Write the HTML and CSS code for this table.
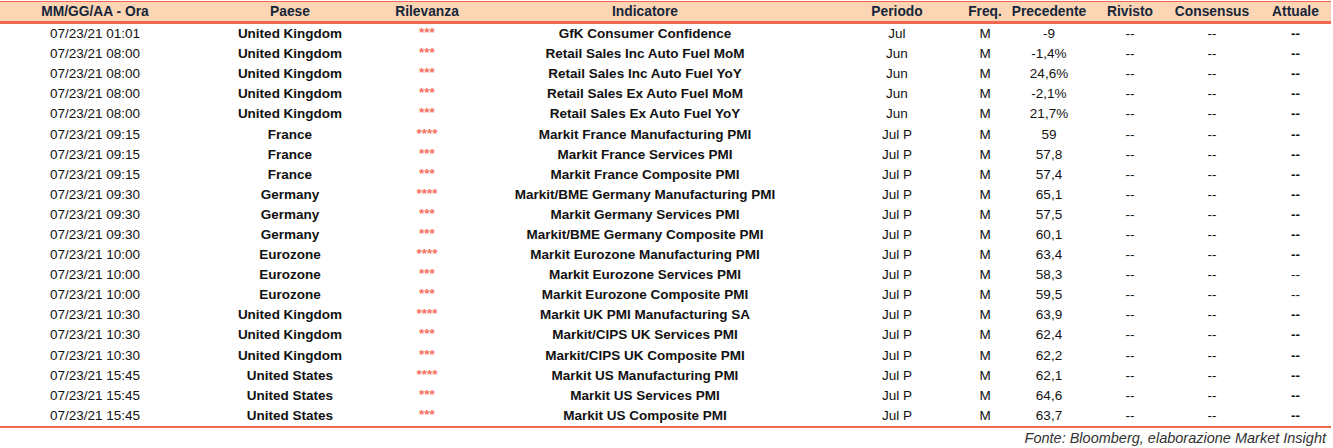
FILE: index.html
```html
<!DOCTYPE html>
<html lang="it">
<head>
<meta charset="utf-8">
<title>Calendario macro</title>
<link rel="stylesheet" href="styles.css">
</head>
<body>
<div class="cal">
  <div class="row head">
    <div>MM/GG/AA - Ora</div><div>Paese</div><div>Rilevanza</div><div>Indicatore</div><div>Periodo</div><div>Freq.</div><div>Precedente</div><div>Rivisto</div><div>Consensus</div><div>Attuale</div>
  </div>
  <div class="body">
    <div class="row"><div>07/23/21 01:01</div><div class="b">United Kingdom</div><div class="st">***</div><div class="b">GfK Consumer Confidence</div><div>Jul</div><div>M</div><div>-9</div><div>--</div><div>--</div><div class="b">--</div></div>
    <div class="row"><div>07/23/21 08:00</div><div class="b">United Kingdom</div><div class="st">***</div><div class="b">Retail Sales Inc Auto Fuel MoM</div><div>Jun</div><div>M</div><div>-1,4%</div><div>--</div><div>--</div><div class="b">--</div></div>
    <div class="row"><div>07/23/21 08:00</div><div class="b">United Kingdom</div><div class="st">***</div><div class="b">Retail Sales Inc Auto Fuel YoY</div><div>Jun</div><div>M</div><div>24,6%</div><div>--</div><div>--</div><div class="b">--</div></div>
    <div class="row"><div>07/23/21 08:00</div><div class="b">United Kingdom</div><div class="st">***</div><div class="b">Retail Sales Ex Auto Fuel MoM</div><div>Jun</div><div>M</div><div>-2,1%</div><div>--</div><div>--</div><div class="b">--</div></div>
    <div class="row"><div>07/23/21 08:00</div><div class="b">United Kingdom</div><div class="st">***</div><div class="b">Retail Sales Ex Auto Fuel YoY</div><div>Jun</div><div>M</div><div>21,7%</div><div>--</div><div>--</div><div class="b">--</div></div>
    <div class="row"><div>07/23/21 09:15</div><div class="b">France</div><div class="st">****</div><div class="b">Markit France Manufacturing PMI</div><div>Jul P</div><div>M</div><div>59</div><div>--</div><div>--</div><div class="b">--</div></div>
    <div class="row"><div>07/23/21 09:15</div><div class="b">France</div><div class="st">***</div><div class="b">Markit France Services PMI</div><div>Jul P</div><div>M</div><div>57,8</div><div>--</div><div>--</div><div class="b">--</div></div>
    <div class="row"><div>07/23/21 09:15</div><div class="b">France</div><div class="st">***</div><div class="b">Markit France Composite PMI</div><div>Jul P</div><div>M</div><div>57,4</div><div>--</div><div>--</div><div class="b">--</div></div>
    <div class="row"><div>07/23/21 09:30</div><div class="b">Germany</div><div class="st">****</div><div class="b">Markit/BME Germany Manufacturing PMI</div><div>Jul P</div><div>M</div><div>65,1</div><div>--</div><div>--</div><div class="b">--</div></div>
    <div class="row"><div>07/23/21 09:30</div><div class="b">Germany</div><div class="st">***</div><div class="b">Markit Germany Services PMI</div><div>Jul P</div><div>M</div><div>57,5</div><div>--</div><div>--</div><div class="b">--</div></div>
    <div class="row"><div>07/23/21 09:30</div><div class="b">Germany</div><div class="st">***</div><div class="b">Markit/BME Germany Composite PMI</div><div>Jul P</div><div>M</div><div>60,1</div><div>--</div><div>--</div><div class="b">--</div></div>
    <div class="row"><div>07/23/21 10:00</div><div class="b">Eurozone</div><div class="st">****</div><div class="b">Markit Eurozone Manufacturing PMI</div><div>Jul P</div><div>M</div><div>63,4</div><div>--</div><div>--</div><div class="b">--</div></div>
    <div class="row"><div>07/23/21 10:00</div><div class="b">Eurozone</div><div class="st">***</div><div class="b">Markit Eurozone Services PMI</div><div>Jul P</div><div>M</div><div>58,3</div><div>--</div><div>--</div><div>--</div></div>
    <div class="row"><div>07/23/21 10:00</div><div class="b">Eurozone</div><div class="st">***</div><div class="b">Markit Eurozone Composite PMI</div><div>Jul P</div><div>M</div><div>59,5</div><div>--</div><div>--</div><div>--</div></div>
    <div class="row"><div>07/23/21 10:30</div><div class="b">United Kingdom</div><div class="st">****</div><div class="b">Markit UK PMI Manufacturing SA</div><div>Jul P</div><div>M</div><div>63,9</div><div>--</div><div>--</div><div class="b">--</div></div>
    <div class="row"><div>07/23/21 10:30</div><div class="b">United Kingdom</div><div class="st">***</div><div class="b">Markit/CIPS UK Services PMI</div><div>Jul P</div><div>M</div><div>62,4</div><div>--</div><div>--</div><div class="b">--</div></div>
    <div class="row"><div>07/23/21 10:30</div><div class="b">United Kingdom</div><div class="st">***</div><div class="b">Markit/CIPS UK Composite PMI</div><div>Jul P</div><div>M</div><div>62,2</div><div>--</div><div>--</div><div class="b">--</div></div>
    <div class="row"><div>07/23/21 15:45</div><div class="b">United States</div><div class="st">****</div><div class="b">Markit US Manufacturing PMI</div><div>Jul P</div><div>M</div><div>62,1</div><div>--</div><div>--</div><div class="b">--</div></div>
    <div class="row"><div>07/23/21 15:45</div><div class="b">United States</div><div class="st">***</div><div class="b">Markit US Services PMI</div><div>Jul P</div><div>M</div><div>64,6</div><div>--</div><div>--</div><div class="b">--</div></div>
    <div class="row"><div>07/23/21 15:45</div><div class="b">United States</div><div class="st">***</div><div class="b">Markit US Composite PMI</div><div>Jul P</div><div>M</div><div>63,7</div><div>--</div><div>--</div><div class="b">--</div></div>
  </div>
  <div class="source">Fonte: Bloomberg, elaborazione Market Insight</div>
</div>
</body>
</html>
```

FILE: styles.css
```css
html, body {
  margin: 0;
  padding: 0;
  background: #ffffff;
}
body {
  font-family: "Liberation Sans", Arial, sans-serif;
  font-size: 13.5px;
  color: #111111;
}
.cal {
  width: 1331px;
  padding-top: 1px;
}
.row {
  display: grid;
  grid-template-columns: 190px 200px 74px 362px 142px 34px 94px 68px 96px 71px;
  height: 20.1px;
  align-items: center;
  text-align: center;
  white-space: nowrap;
}
.row > div {
  line-height: 16px;
}
.head {
  height: 19px;
  background: #fcd5b4;
  border-top: 1px solid #f0674f;
  border-bottom: 3px solid #f0674f;
  font-weight: bold;
  font-size: 13.8px;
  color: #16263a;
}
.body {
  border-bottom: 2px solid #f0674f;
}
.b {
  font-weight: bold;
}
.st {
  color: #f5705e;
  font-size: 13.5px;
  font-weight: bold;
  position: relative;
  top: -1px;
}
.source {
  text-align: right;
  font-style: italic;
  font-size: 14.5px;
  color: #333333;
  padding-right: 5px;
  line-height: 20px;
}
```
